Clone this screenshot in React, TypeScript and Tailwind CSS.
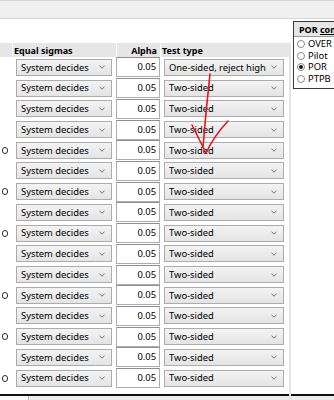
import React from "react";

const TESTS = [
  "One-sided, reject high",
  ...Array.from({ length: 15 }, () => "Two-sided"),
];

// rows that show the clipped radio at the far left
const MARKED = [4, 6, 8, 11, 13, 15];

function Chevron() {
  return (
    <svg width="6" height="4" viewBox="0 0 6 4" className="shrink-0">
      <path d="M0.5 0.8 L3 3.2 L5.5 0.8" fill="none" stroke="#6a6a6a" strokeWidth="0.9" />
    </svg>
  );
}

function Combo({ text, w }: { text: string; w: string }) {
  return (
    <div
      className={`${w} h-[17px] flex items-center justify-between pl-[4px] pr-[6px] border border-[#acacac] bg-gradient-to-b from-[#f3f3f3] to-[#e4e4e4] text-black whitespace-nowrap`}
    >
      <span>{text}</span>
      <Chevron />
    </div>
  );
}

function Radio({ on }: { on?: boolean }) {
  return (
    <span className="w-[8px] h-[8px] rounded-full border border-[#8a8a8a] bg-white grid place-items-center shrink-0">
      {on && <span className="w-[4px] h-[4px] rounded-full bg-[#1a1a1a]" />}
    </span>
  );
}

export default function App() {
  return (
    <div className="relative w-[334px] h-[400px] overflow-hidden bg-white text-[9.4px] leading-none text-black font-['Noto_Sans',sans-serif]">
      {/* window strip */}
      <div className="h-[19px] bg-[#f0f0f0] border-t border-[#d6d6d6] border-b border-[#9c9c9c]" />

      <div className="flex h-[375px]">
        {/* table */}
        <div className="w-[291px] pt-[24px]">
          <div className="flex h-[365px] border-r-2 border-[#e4e4e4]">
            <div className="w-[289px]">
              <div className="flex gap-px h-[14px] font-bold text-[9px]">
                <div className="w-[12px] bg-[#e6e6e6]" />
                <div className="w-[103px] bg-[#e6e6e6] flex items-center pl-[1px]">Equal sigmas</div>
                <div className="w-[43px] bg-[#e6e6e6] flex items-center justify-end pr-[3px]">Alpha</div>
                <div className="flex-1 bg-[#e6e6e6] flex items-center pl-[1px]">Test type</div>
              </div>
              {TESTS.map((t, i) => (
                <div key={i} className="flex items-center h-[20.73px]">
                  <div className="w-[16px] pl-[2px] flex items-center">
                    {MARKED.includes(i) && (
                      <span className="w-[6px] h-[7px] rounded-full border border-[#2e2e2e]" />
                    )}
                  </div>
                  <Combo text="System decides" w="w-[96px]" />
                  <div className="ml-[4px] w-[44px] h-[20px] border border-[#abadb3] border-t-[#8e8f8f] bg-white text-right pr-[3px] pt-[4px]">
                    0.05
                  </div>
                  <div className="ml-[4px]">
                    <Combo text={t} w="w-[120px]" />
                  </div>
                </div>
              ))}
            </div>
          </div>
        </div>

        {/* POR group */}
        <div className="flex-1 pt-[2px] pl-[2px]">
          <div className="w-[60px] h-[68px] border border-[#3a3a3a] bg-white">
            <div className="h-[15px] bg-[#e6e6e6] border-b border-[#9a9a9a] flex items-center pl-[5px] font-bold text-[9px] whitespace-nowrap">
              POR&nbsp;<span className="underline">compare</span>
            </div>
            <div className="flex flex-col gap-[3.6px] pt-[3px] pl-[3px]">
              {["OVER", "Pilot", "POR", "PTPB"].map((l) => (
                <div key={l} className="flex items-center gap-[3px] h-[8px] whitespace-nowrap">
                  <Radio on={l === "POR"} />
                  <span>{l}</span>
                </div>
              ))}
            </div>
          </div>
        </div>
      </div>

      {/* bottom tab strip */}
      <div className="h-[6px] border-t-2 border-[#111] bg-[#ececec] flex">
        <div className="w-[29px] bg-[#f9f9f9] border-r border-[#b5b5b5]" />
      </div>

      {/* red hand-drawn annotation */}
      <svg className="absolute inset-0 pointer-events-none" width="334" height="400" viewBox="0 0 334 400">
        <path d="M210 74 Q206 110 203 147" fill="none" stroke="#e8141c" strokeWidth="1.6" strokeLinecap="round" />
        <path d="M192 125 Q199 139 206 153 Q214 136 228 121" fill="none" stroke="#e8141c" strokeWidth="1.6" strokeLinecap="round" strokeLinejoin="round" />
      </svg>
    </div>
  );
}
